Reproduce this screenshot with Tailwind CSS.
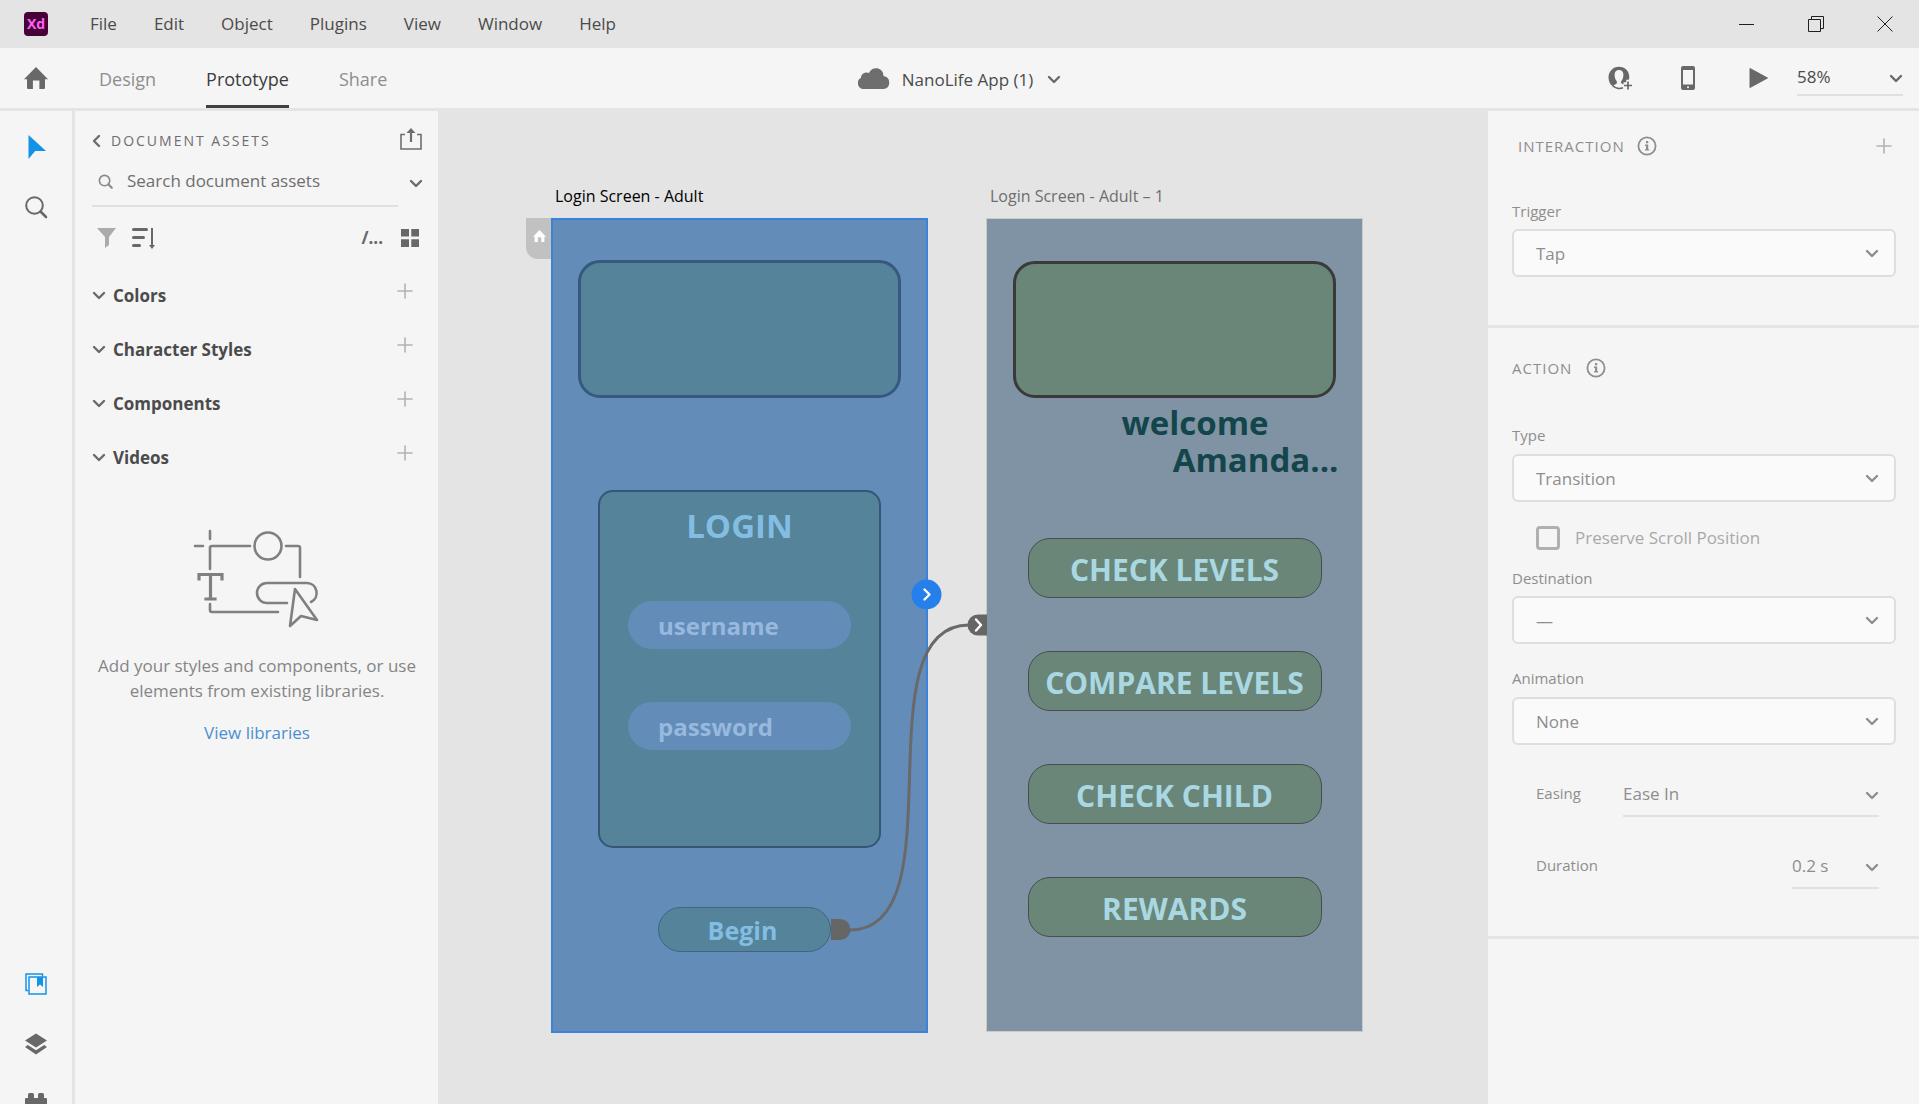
<!DOCTYPE html>
<html lang="en">
<head>
<meta charset="utf-8">
<meta name="viewport" content="width=device-width, initial-scale=1">
<title>NanoLife App (1)</title>
<script src="https://cdn.jsdelivr.net/npm/@tailwindcss/browser@4"></script>
</head>
<body class="flex h-screen flex-col overflow-hidden bg-[#e4e4e4] font-['Open_Sans','Noto_Sans',sans-serif] text-[17px] leading-6 text-[#4b4b4b]">

<svg class="hidden">
  <symbol id="chev" viewBox="0 0 14 10"><path d="M2 2l5 5 5-5" fill="none" stroke="currentColor" stroke-width="2.4" stroke-linecap="round" stroke-linejoin="round"/></symbol>
  <symbol id="plus" viewBox="0 0 16 16"><path d="M8 1v14M1 8h14" fill="none" stroke="currentColor" stroke-width="1.6" stroke-linecap="round"/></symbol>
  <symbol id="info" viewBox="0 0 20 20"><circle cx="10" cy="10" r="8.6" fill="none" stroke="currentColor" stroke-width="1.8"/><path d="M9 5h2.2v2.2H9zM8 8.6h3.2v4.6h1V14.6H8v-1.4h1V10H8z" fill="currentColor"/></symbol>
  <symbol id="home" viewBox="0 0 24 22"><path d="M12 0L24 12.2h-3V21a1 1 0 0 1-1 1h-4.6v-8.500H8.900V22H4a1 1 0 0 1-1-1v-8.800H0z" fill="currentColor"/></symbol>
</svg>

<!-- Title bar -->
<header class="flex h-12 shrink-0 items-center justify-between">
  <div class="flex items-center">
    <div class="ml-6 flex h-6 w-6 items-center justify-center rounded bg-[#470137] text-sm font-bold leading-none text-[#ff61f6]">Xd</div>
    <nav class="ml-[42px] flex gap-[21px]">
      <a href="#" class="-ml-2 px-2">File</a>
      <a href="#" class="px-2">Edit</a>
      <a href="#" class="px-2">Object</a>
      <a href="#" class="px-2">Plugins</a>
      <a href="#" class="px-2">View</a>
      <a href="#" class="px-2">Window</a>
      <a href="#" class="px-2">Help</a>
    </nav>
  </div>
  <div class="mr-[26px] flex items-center gap-[53px] text-[#1f1f1f]">
    <button aria-label="Minimize"><svg class="block h-4 w-4" viewBox="0 0 16 16"><path d="M0 8.500h15" stroke="currentColor"/></svg></button>
    <button aria-label="Restore"><svg class="block h-4 w-4" viewBox="0 0 16 16" fill="none" stroke="currentColor"><path d="M.5 3.500h12v12h-12zM3.500 3.500v-3h12v12h-3"/></svg></button>
    <button aria-label="Close"><svg class="block h-4 w-4" viewBox="0 0 16 16"><path d="M.5.5l15 15M15.500.5l-15 15" stroke="currentColor"/></svg></button>
  </div>
</header>

<!-- Toolbar -->
<div class="grid h-[63px] shrink-0 grid-cols-3 border-b-3 border-[#e4e4e4] bg-[#f5f5f5]">
  <div class="flex items-stretch">
    <button aria-label="Home" class="ml-6 w-6 text-[#686868]"><svg class="h-[22px] w-6"><use href="#home"/></svg></button>
    <nav class="ml-[51px] flex gap-[50px] text-lg text-[#8e8e8e]">
      <a href="#" class="flex items-center border-b-3 border-transparent pt-1">Design</a>
      <a href="#" class="flex items-center border-b-3 border-[#404040] pt-1 text-[#3c3c3c]">Prototype</a>
      <a href="#" class="flex items-center border-b-3 border-transparent pt-1">Share</a>
    </nav>
  </div>
  <button class="flex items-center justify-center">
    <svg class="h-[22px] w-8 text-[#6e6e6e]" viewBox="0 0 32 22"><path d="M6 22a6 6 0 0 1-3-11.300A5.500 5.500 0 0 1 11 6a7.500 7.500 0 0 1 14.500 3A6.600 6.600 0 0 1 26 22z" fill="currentColor"/></svg>
    <span class="ml-3 pt-[3px]">NanoLife App (1)</span>
    <svg class="ml-[14px] mt-[3px] h-[10px] w-[14px] text-[#6a6a6a]"><use href="#chev"/></svg>
  </button>
  <div class="flex items-center justify-end text-[#686868]">
    <button aria-label="Invite"><svg class="block h-6 w-6" viewBox="0 0 24 24"><path d="M11 .8C4.900.8.5 5.600.5 11.500c0 3.600 1.500 6.600 4 8.500l3.900-2.300c.7-.4.7-1.800.2-2.600-1.300-1.700-2-4-2-6.300C6.600 6 8.200 4 11 4s4.400 2 4.400 4.800c0 2.300-.7 4.600-2 6.300-.4.700-.5 1.900 0 2.400l2.100.8v-2h2.700v-2.600h2.600c.3-.9.500-1.500.5-2.500C21.300 5.400 17.200.8 11 .8z" fill="currentColor"/><path d="M4.500 19.500c2.500 2.700 7 3.600 10.500 2.300M20 15.500v8M16 19.500h8" fill="none" stroke="currentColor" stroke-width="1.700"/></svg></button>
    <button aria-label="Preview on device" class="ml-[49px]"><svg class="block h-6 w-[14px]" viewBox="0 0 14 24"><rect width="14" height="24" rx="2" fill="currentColor"/><path d="M2 4h10v14.500H2z" fill="#f5f5f5"/><circle cx="7" cy="21.300" r="1" fill="#f5f5f5"/></svg></button>
    <button aria-label="Play" class="ml-[54px]"><svg class="block h-5 w-[19px]" viewBox="0 0 19 20"><path d="M1 0.500L18.500 10 1 19.500z" fill="currentColor" stroke="currentColor" stroke-linejoin="round"/></svg></button>
    <div class="relative ml-[29px] mr-4 w-[106px]">
      <select aria-label="Zoom" class="block h-9 w-full appearance-none border-b-2 border-[#e0e0e0] pb-px text-[17px] text-[#4b4b4b]"><option>58%</option></select>
      <svg class="pointer-events-none absolute right-0 top-[14px] h-[10px] w-[14px]"><use href="#chev"/></svg>
    </div>
  </div>
</div>

<div class="flex min-h-0 flex-1">
  <!-- Tool rail -->
  <aside class="flex w-[75px] shrink-0 flex-col items-center justify-between overflow-hidden border-r-3 border-[#e4e4e4] bg-[#f5f5f5] pt-6 text-[#686868]">
    <div class="flex flex-col items-center gap-9">
      <button aria-label="Select" class="pl-[2px]"><svg class="block h-6 w-[18px]" viewBox="0 0 18 24"><path d="M.5 0L18 16H7.200L.5 24z" fill="#1592e6"/></svg></button>
      <button aria-label="Zoom"><svg class="block h-6 w-6" viewBox="0 0 24 24" fill="none" stroke="currentColor"><circle cx="10.500" cy="10.500" r="8.300" stroke-width="2"/><path d="M16.500 16.500l5.500 5.500" stroke-width="2.600" stroke-linecap="round"/></svg></button>
    </div>
    <div class="-mb-[11px] flex flex-col items-center gap-[38px]">
      <button aria-label="Libraries"><svg class="block h-[22px] w-[22px]" viewBox="0 0 22 22" fill="none" stroke="#1592e6" stroke-width="1.500"><path d="M3.500 17.500H1V1h16.500v2.500"/><path d="M4 4h17v17H4z"/><path d="M12 4h6v10l-3-2.500-3 2.500z" fill="#1592e6" stroke="none"/></svg></button>
      <button aria-label="Layers"><svg class="block h-[22px] w-[22px]" viewBox="0 0 22 22" fill="currentColor"><path d="M11 .5L22 7.500 11 14.500 0 7.500z"/><path d="M2.800 12L11 17.200 19.200 12l2.800 1.900L11 21.500 0 13.900z"/></svg></button>
      <button aria-label="Plugins"><svg class="block h-[22px] w-[22px]" viewBox="0 0 22 22" fill="currentColor"><path d="M0 6a1 1 0 0 1 1-1h2V1.500A1.500 1.500 0 0 1 4.500 0h3A1.500 1.500 0 0 1 9 1.500V5h4V1.500A1.500 1.500 0 0 1 14.500 0h3A1.500 1.500 0 0 1 19 1.500V5h2a1 1 0 0 1 1 1v16H0z"/></svg></button>
    </div>
  </aside>

  <!-- Document assets -->
  <section class="flex w-[363px] shrink-0 flex-col bg-[#f5f5f5] pl-[17px] pr-4">
    <div class="mt-[14px] flex h-8 items-center text-[#6e6e6e]">
      <svg class="h-[14px] w-[9px]" viewBox="0 0 9 14"><path d="M7 2L2 7l5 5" fill="none" stroke="currentColor" stroke-width="2.400" stroke-linecap="round" stroke-linejoin="round"/></svg>
      <h2 class="ml-[10px] text-[14px] tracking-[2px]">DOCUMENT ASSETS</h2>
      <button aria-label="Share assets" class="ml-auto pb-1"><svg class="block h-[22px] w-[22px]" viewBox="0 0 22 22" fill="none" stroke="currentColor" stroke-width="1.600"><path d="M5 6.500H1V21h20V6.500h-4M11 14V3" /><path d="M11 0l4.500 5h-9z" fill="currentColor" stroke="none"/><path d="M11 14V3" stroke-width="2.200"/></svg></button>
    </div>
    <div class="flex items-start">
      <label class="flex h-[50px] w-[306px] items-center border-b-2 border-[#e0e0e0] pl-[6px] text-[#8a8a8a]">
        <svg class="h-[15px] w-[15px] shrink-0" viewBox="0 0 24 24" fill="none" stroke="currentColor"><circle cx="10.500" cy="10.500" r="8.300" stroke-width="2.600"/><path d="M16.500 16.500l5.500 5.500" stroke-width="3.400" stroke-linecap="round"/></svg>
        <input type="text" aria-label="Search document assets" placeholder="Search document assets" class="ml-[14px] w-full outline-none placeholder:text-[#6e6e6e]">
      </label>
      <button aria-label="Search options" class="-mr-px ml-auto mt-[22px] text-[#6a6a6a]"><svg class="block h-[10px] w-[14px]"><use href="#chev"/></svg></button>
    </div>
    <div class="mt-[17px] flex h-7 items-center pl-[5px] text-[#686868]">
      <button aria-label="Filter"><svg class="block h-5 w-[19px]" viewBox="0 0 19 20"><path d="M0 0h19l-7 9v8l-4 3V9z" fill="#ababab"/></svg></button>
      <button aria-label="Sort" class="ml-4"><svg class="block h-[22px] w-[23px]" viewBox="0 0 23 22"><path d="M1.500 2.500h13M1.500 10.500h10M1.500 18.500h6" stroke="currentColor" stroke-width="3" stroke-linecap="round"/><path d="M20 1v18" stroke="currentColor" stroke-width="2"/><path d="M17 18h6l-3 4z" fill="currentColor"/></svg></button>
      <button aria-label="Path" class="ml-auto text-[17px] font-bold leading-5">/...</button>
      <button aria-label="Grid view" class="ml-[18px] mr-[3px]"><svg class="block h-[18px] w-[18px]" viewBox="0 0 18 18"><path d="M0 0h8v7.500H0zM10.300 0h8v7.500h-8zM0 10.300h8V18H0zM10.300 10.300h8V18h-8z" fill="currentColor"/></svg></button>
    </div>
    <ul class="mt-[17px]">
      <li class="flex h-[54px] items-center"><svg class="h-[10px] w-[14px] text-[#6a6a6a]"><use href="#chev"/></svg><h3 class="ml-[7px] font-bold">Colors</h3><button aria-label="Add color" class="mb-[10px] ml-auto mr-[9px] text-[#b2b2b2]"><svg class="block h-4 w-4"><use href="#plus"/></svg></button></li>
      <li class="flex h-[54px] items-center"><svg class="h-[10px] w-[14px] text-[#6a6a6a]"><use href="#chev"/></svg><h3 class="ml-[7px] font-bold">Character Styles</h3><button aria-label="Add character style" class="mb-[10px] ml-auto mr-[9px] text-[#b2b2b2]"><svg class="block h-4 w-4"><use href="#plus"/></svg></button></li>
      <li class="flex h-[54px] items-center"><svg class="h-[10px] w-[14px] text-[#6a6a6a]"><use href="#chev"/></svg><h3 class="ml-[7px] font-bold">Components</h3><button aria-label="Add component" class="mb-[10px] ml-auto mr-[9px] text-[#b2b2b2]"><svg class="block h-4 w-4"><use href="#plus"/></svg></button></li>
      <li class="flex h-[54px] items-center"><svg class="h-[10px] w-[14px] text-[#6a6a6a]"><use href="#chev"/></svg><h3 class="ml-[7px] font-bold">Videos</h3><button aria-label="Add video" class="mb-[10px] ml-auto mr-[9px] text-[#b2b2b2]"><svg class="block h-4 w-4"><use href="#plus"/></svg></button></li>
    </ul>
    <svg class="mx-auto mt-11 h-[100px] w-[128px] shrink-0" viewBox="0 0 128 100" fill="none" stroke="#808080" stroke-width="2.600" stroke-linecap="round" stroke-linejoin="round">
      <path d="M17 2v8M2 17h8M17 40V19a2 2 0 0 1 2-2h38M93 17h12a2 2 0 0 1 2 2v29M17 75v6a2 2 0 0 0 2 2h66"/>
      <circle cx="75" cy="17" r="13.500"/>
      <path d="M94 74H74a10 10 0 0 1 0-20h40a10 10 0 0 1 4 19"/>
      <path d="M102 60l22 31-16-4-11 10z"/>
      <path d="M6 50v-4.500h23V50M17.500 46v24M13 70h9" stroke-width="3.200" stroke-linecap="square" stroke-linejoin="miter"/>
    </svg>
    <p class="mt-6 whitespace-nowrap text-center leading-[25px] text-[#858585]">Add your styles and components, or use<br>elements from existing libraries.</p>
    <a href="#" class="mt-[17px] text-center leading-[25px] text-[#4a90d2]">View libraries</a>
  </section>

  <!-- Canvas -->
  <main class="relative min-w-0 flex-1 overflow-hidden bg-[#e4e4e4]">
    <p class="absolute left-[117px] top-[73px] whitespace-nowrap text-base text-black">Login Screen - Adult</p>
    <div class="absolute left-[88px] top-[107px] flex h-[41px] w-[25px] justify-center rounded-bl-xl bg-[#c1c1c1] pl-px pt-3 text-white"><svg class="h-3 w-[13px]" viewBox="0 0 24 22"><use href="#home"/></svg></div>
    <section class="absolute left-[113px] top-[107px] flex h-[815px] w-[377px] flex-col items-center border-2 border-[#3b82db] bg-[#638db8]">
      <div class="mt-[40px] h-[138px] w-[323px] shrink-0 rounded-[22px] border-3 border-[#385880] bg-[#54839a]"></div>
      <form class="mt-[92px] flex h-[358px] w-[283px] shrink-0 flex-col items-center rounded-[15px] border-2 border-[#365577] bg-[#54839a]">
        <h1 class="mt-[10px] text-[33px] font-bold leading-[48px] text-[#83bde2]">LOGIN</h1>
        <input type="text" aria-label="username" placeholder="username" class="mt-[51px] h-12 w-[223px] shrink-0 rounded-full bg-[#638db8] px-[30px] pt-px text-2xl font-bold outline-none placeholder:text-[#98b9df]">
        <input type="text" aria-label="password" placeholder="password" class="mt-[53px] h-12 w-[223px] shrink-0 rounded-full bg-[#638db8] px-[30px] pt-px text-2xl font-bold outline-none placeholder:text-[#98b9df]">
      </form>
      <button class="ml-[10px] mt-[59px] h-[45px] w-[173px] shrink-0 rounded-full border border-[#406487] bg-[#54839a] pr-1 text-[25px] font-bold text-[#83bde2]">Begin</button>
    </section>

    <p class="absolute left-[552px] top-[73px] whitespace-nowrap text-base text-[#6e6e6e]">Login Screen - Adult – 1</p>
    <section class="absolute left-[548px] top-[107px] flex h-[814px] w-[377px] flex-col items-center border border-[#cacaca] bg-[#7f93a4]">
      <div class="mt-[42px] h-[137px] w-[323px] shrink-0 rounded-[22px] border-[3px] border-[#3a3a3a] bg-[#698679]"></div>
      <p class="mt-[6px] flex w-[352px] flex-col whitespace-nowrap text-[33px] font-bold leading-[37px] text-[#13454b]"><span class="pl-[123px]">welcome</span><span class="pr-3 text-right">Amanda...</span></p>
      <div class="mt-[60px] flex flex-col gap-[53px] text-[30px] font-bold text-[#a9d8e2]">
        <button class="h-[60px] w-[294px] rounded-[22px] border border-[#4a4d4d] bg-[#698679] pt-1">CHECK LEVELS</button>
        <button class="h-[60px] w-[294px] whitespace-nowrap rounded-[22px] border border-[#4a4d4d] bg-[#698679] pt-1">COMPARE LEVELS</button>
        <button class="h-[60px] w-[294px] rounded-[22px] border border-[#4a4d4d] bg-[#698679] pt-1">CHECK CHILD</button>
        <button class="h-[60px] w-[294px] rounded-[22px] border border-[#4a4d4d] bg-[#698679] pt-1">REWARDS</button>
      </div>
    </section>

    <!-- Prototype connector -->
    <svg class="pointer-events-none absolute left-[393px] top-[464px] h-[370px] w-[160px]" viewBox="393 464 160 370" fill="none">
      <path d="M412 819C522 819 421 514 531 514" stroke="#696969" stroke-width="3"/>
      <path d="M393 808h9a10.500 10.500 0 0 1 0 21h-9z" fill="#666"/>
      <path d="M549 503.500h-9a10.500 10.500 0 0 0 0 21h9z" fill="#666"/>
      <path d="M538 508.500l5 5.500-5 5.500" stroke="#fff" stroke-width="2.400" stroke-linecap="round" stroke-linejoin="round"/>
      <circle cx="488.500" cy="483.500" r="15" fill="#2680eb"/>
      <path d="M486.500 478.500l5 5-5 5" stroke="#fff" stroke-width="2.400" stroke-linecap="round" stroke-linejoin="round"/>
    </svg>
  </main>

  <!-- Property inspector -->
  <aside class="w-[431px] shrink-0 bg-[#f5f5f5] text-[#8e8e8e]">
    <section class="h-[217px] border-b-3 border-[#e4e4e4] pl-6 pr-[23px] pt-[25px]">
      <div class="flex h-5 items-center pl-[6px]">
        <h2 class="text-[15px] tracking-[1px]">INTERACTION</h2>
        <svg class="ml-3 h-5 w-5"><use href="#info"/></svg>
        <button aria-label="Add interaction" class="ml-auto mr-1 text-[#b2b2b2]"><svg class="block h-4 w-4"><use href="#plus"/></svg></button>
      </div>
      <label for="trigger" class="mt-[43px] block text-[15px]">Trigger</label>
      <div class="relative mt-[6px]">
        <select id="trigger" class="block h-12 w-full appearance-none rounded-md border-2 border-[#dedede] bg-[#fafafa] pl-[22px] pt-px"><option>Tap</option></select>
        <svg class="pointer-events-none absolute right-[17px] top-5 h-[10px] w-[14px]"><use href="#chev"/></svg>
      </div>
    </section>
    <section class="h-[611px] border-b-3 border-[#e4e4e4] pl-6 pr-[23px] pt-[30px]">
      <div class="flex h-5 items-center">
        <h2 class="text-[15px] tracking-[1px]">ACTION</h2>
        <svg class="ml-[14px] h-5 w-5"><use href="#info"/></svg>
      </div>
      <label for="type" class="mt-[45px] block text-[15px]">Type</label>
      <div class="relative mt-[7px]">
        <select id="type" class="block h-12 w-full appearance-none rounded-md border-2 border-[#dedede] bg-[#fafafa] pl-[22px] pt-px"><option>Transition</option></select>
        <svg class="pointer-events-none absolute right-[17px] top-5 h-[10px] w-[14px]"><use href="#chev"/></svg>
      </div>
      <label class="ml-6 mt-6 flex items-center gap-[15px] text-[#a9a9a9]"><input type="checkbox" class="h-6 w-6 appearance-none rounded border-3 border-[#b0b0b0]">Preserve Scroll Position</label>
      <label for="destination" class="mt-4 block text-[15px]">Destination</label>
      <div class="relative mt-[6px]">
        <select id="destination" class="block h-12 w-full appearance-none rounded-md border-2 border-[#dedede] bg-[#fafafa] pl-[22px] pt-px"><option>—</option></select>
        <svg class="pointer-events-none absolute right-[17px] top-5 h-[10px] w-[14px]"><use href="#chev"/></svg>
      </div>
      <label for="animation" class="mt-[22px] block text-[15px]">Animation</label>
      <div class="relative mt-[7px]">
        <select id="animation" class="block h-12 w-full appearance-none rounded-md border-2 border-[#dedede] bg-[#fafafa] pl-[22px] pt-px"><option>None</option></select>
        <svg class="pointer-events-none absolute right-[17px] top-5 h-[10px] w-[14px]"><use href="#chev"/></svg>
      </div>
      <div class="ml-6 mr-[17px] mt-8 flex items-center">
        <label for="easing" class="w-[87px] pb-2 text-[15px]">Easing</label>
        <div class="relative flex-1">
          <select id="easing" class="block h-10 w-full appearance-none border-b-2 border-[#e0e0e0] pb-1"><option>Ease In</option></select>
          <svg class="pointer-events-none absolute right-0 top-[14px] h-[10px] w-[14px]"><use href="#chev"/></svg>
        </div>
      </div>
      <div class="ml-6 mr-[17px] mt-8 flex items-center justify-between">
        <label for="duration" class="pb-2 text-[15px]">Duration</label>
        <div class="relative w-[87px]">
          <select id="duration" class="block h-10 w-full appearance-none border-b-2 border-[#e0e0e0] pb-1"><option>0.2 s</option></select>
          <svg class="pointer-events-none absolute right-0 top-[14px] h-[10px] w-[14px]"><use href="#chev"/></svg>
        </div>
      </div>
    </section>
  </aside>
</div>
</body>
</html>
